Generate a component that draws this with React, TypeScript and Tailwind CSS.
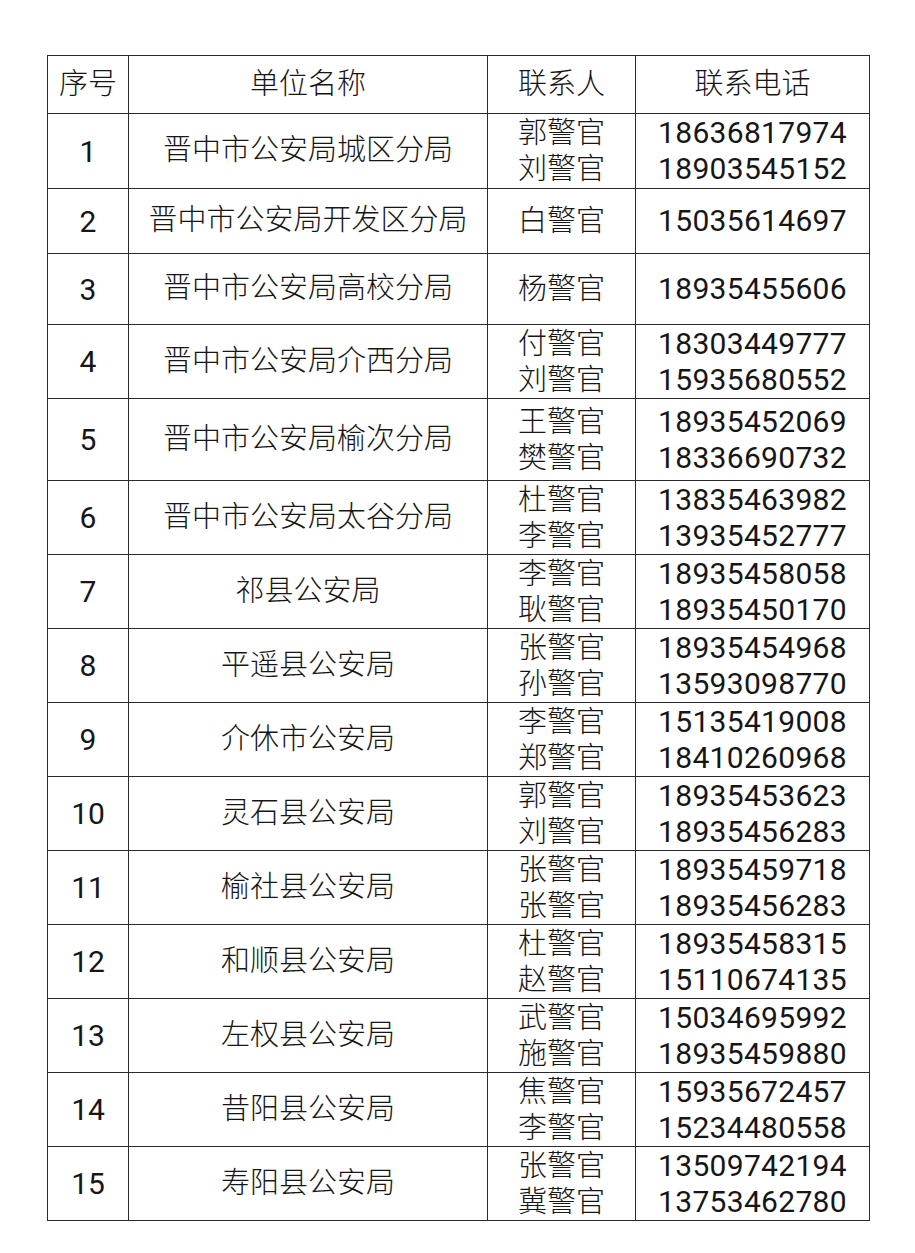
const rows: { no: string; name: string; people: string[]; phones: string[]; h: number }[] = [
  { no: '1', name: '晋中市公安局城区分局', people: ['郭警官', '刘警官'], phones: ['18636817974', '18903545152'], h: 75 },
  { no: '2', name: '晋中市公安局开发区分局', people: ['白警官'], phones: ['15035614697'], h: 65 },
  { no: '3', name: '晋中市公安局高校分局', people: ['杨警官'], phones: ['18935455606'], h: 71 },
  { no: '4', name: '晋中市公安局介西分局', people: ['付警官', '刘警官'], phones: ['18303449777', '15935680552'], h: 74 },
  { no: '5', name: '晋中市公安局榆次分局', people: ['王警官', '樊警官'], phones: ['18935452069', '18336690732'], h: 82 },
  { no: '6', name: '晋中市公安局太谷分局', people: ['杜警官', '李警官'], phones: ['13835463982', '13935452777'], h: 74 },
  { no: '7', name: '祁县公安局', people: ['李警官', '耿警官'], phones: ['18935458058', '18935450170'], h: 74 },
  { no: '8', name: '平遥县公安局', people: ['张警官', '孙警官'], phones: ['18935454968', '13593098770'], h: 74 },
  { no: '9', name: '介休市公安局', people: ['李警官', '郑警官'], phones: ['15135419008', '18410260968'], h: 74 },
  { no: '10', name: '灵石县公安局', people: ['郭警官', '刘警官'], phones: ['18935453623', '18935456283'], h: 74 },
  { no: '11', name: '榆社县公安局', people: ['张警官', '张警官'], phones: ['18935459718', '18935456283'], h: 74 },
  { no: '12', name: '和顺县公安局', people: ['杜警官', '赵警官'], phones: ['18935458315', '15110674135'], h: 74 },
  { no: '13', name: '左权县公安局', people: ['武警官', '施警官'], phones: ['15034695992', '18935459880'], h: 74 },
  { no: '14', name: '昔阳县公安局', people: ['焦警官', '李警官'], phones: ['15935672457', '15234480558'], h: 74 },
  { no: '15', name: '寿阳县公安局', people: ['张警官', '冀警官'], phones: ['13509742194', '13753462780'], h: 74 },
];

const cell = 'border-[1.5px] border-[#2a2a2a] text-center align-middle p-0';

export default function App() {
  return (
    <div
      className="w-[915px] h-[1253px] bg-white pt-[55px] pl-[47px] text-[#161616] font-light"
      style={{ fontFamily: 'Roboto, "Noto Sans CJK SC", sans-serif' }}
    >
      <table className="border-collapse table-fixed w-[822px]">
        <colgroup>
          <col className="w-[81px]" />
          <col className="w-[359px]" />
          <col className="w-[148px]" />
          <col className="w-[234px]" />
        </colgroup>
        <thead>
          <tr className="h-[58px] text-[29px] leading-none">
            <th className={`${cell} font-light`}>序号</th>
            <th className={`${cell} font-light`}>单位名称</th>
            <th className={`${cell} font-light`}>联系人</th>
            <th className={`${cell} font-light`}>联系电话</th>
          </tr>
        </thead>
        <tbody>
          {rows.map((r) => (
            <tr key={r.no} style={{ height: r.h }}>
              <td className={`${cell} text-[30px] font-normal`}>{r.no}</td>
              <td className={`${cell} text-[29px]`}>{r.name}</td>
              <td className={`${cell} text-[29px] leading-[36px]`}>
                {r.people.map((p, i) => (
                  <div key={i}>{p}</div>
                ))}
              </td>
              <td className={`${cell} text-[30px] leading-[36px] tracking-[0.3px] font-normal`}>
                {r.phones.map((p, i) => (
                  <div key={i}>{p}</div>
                ))}
              </td>
            </tr>
          ))}
        </tbody>
      </table>
    </div>
  );
}
